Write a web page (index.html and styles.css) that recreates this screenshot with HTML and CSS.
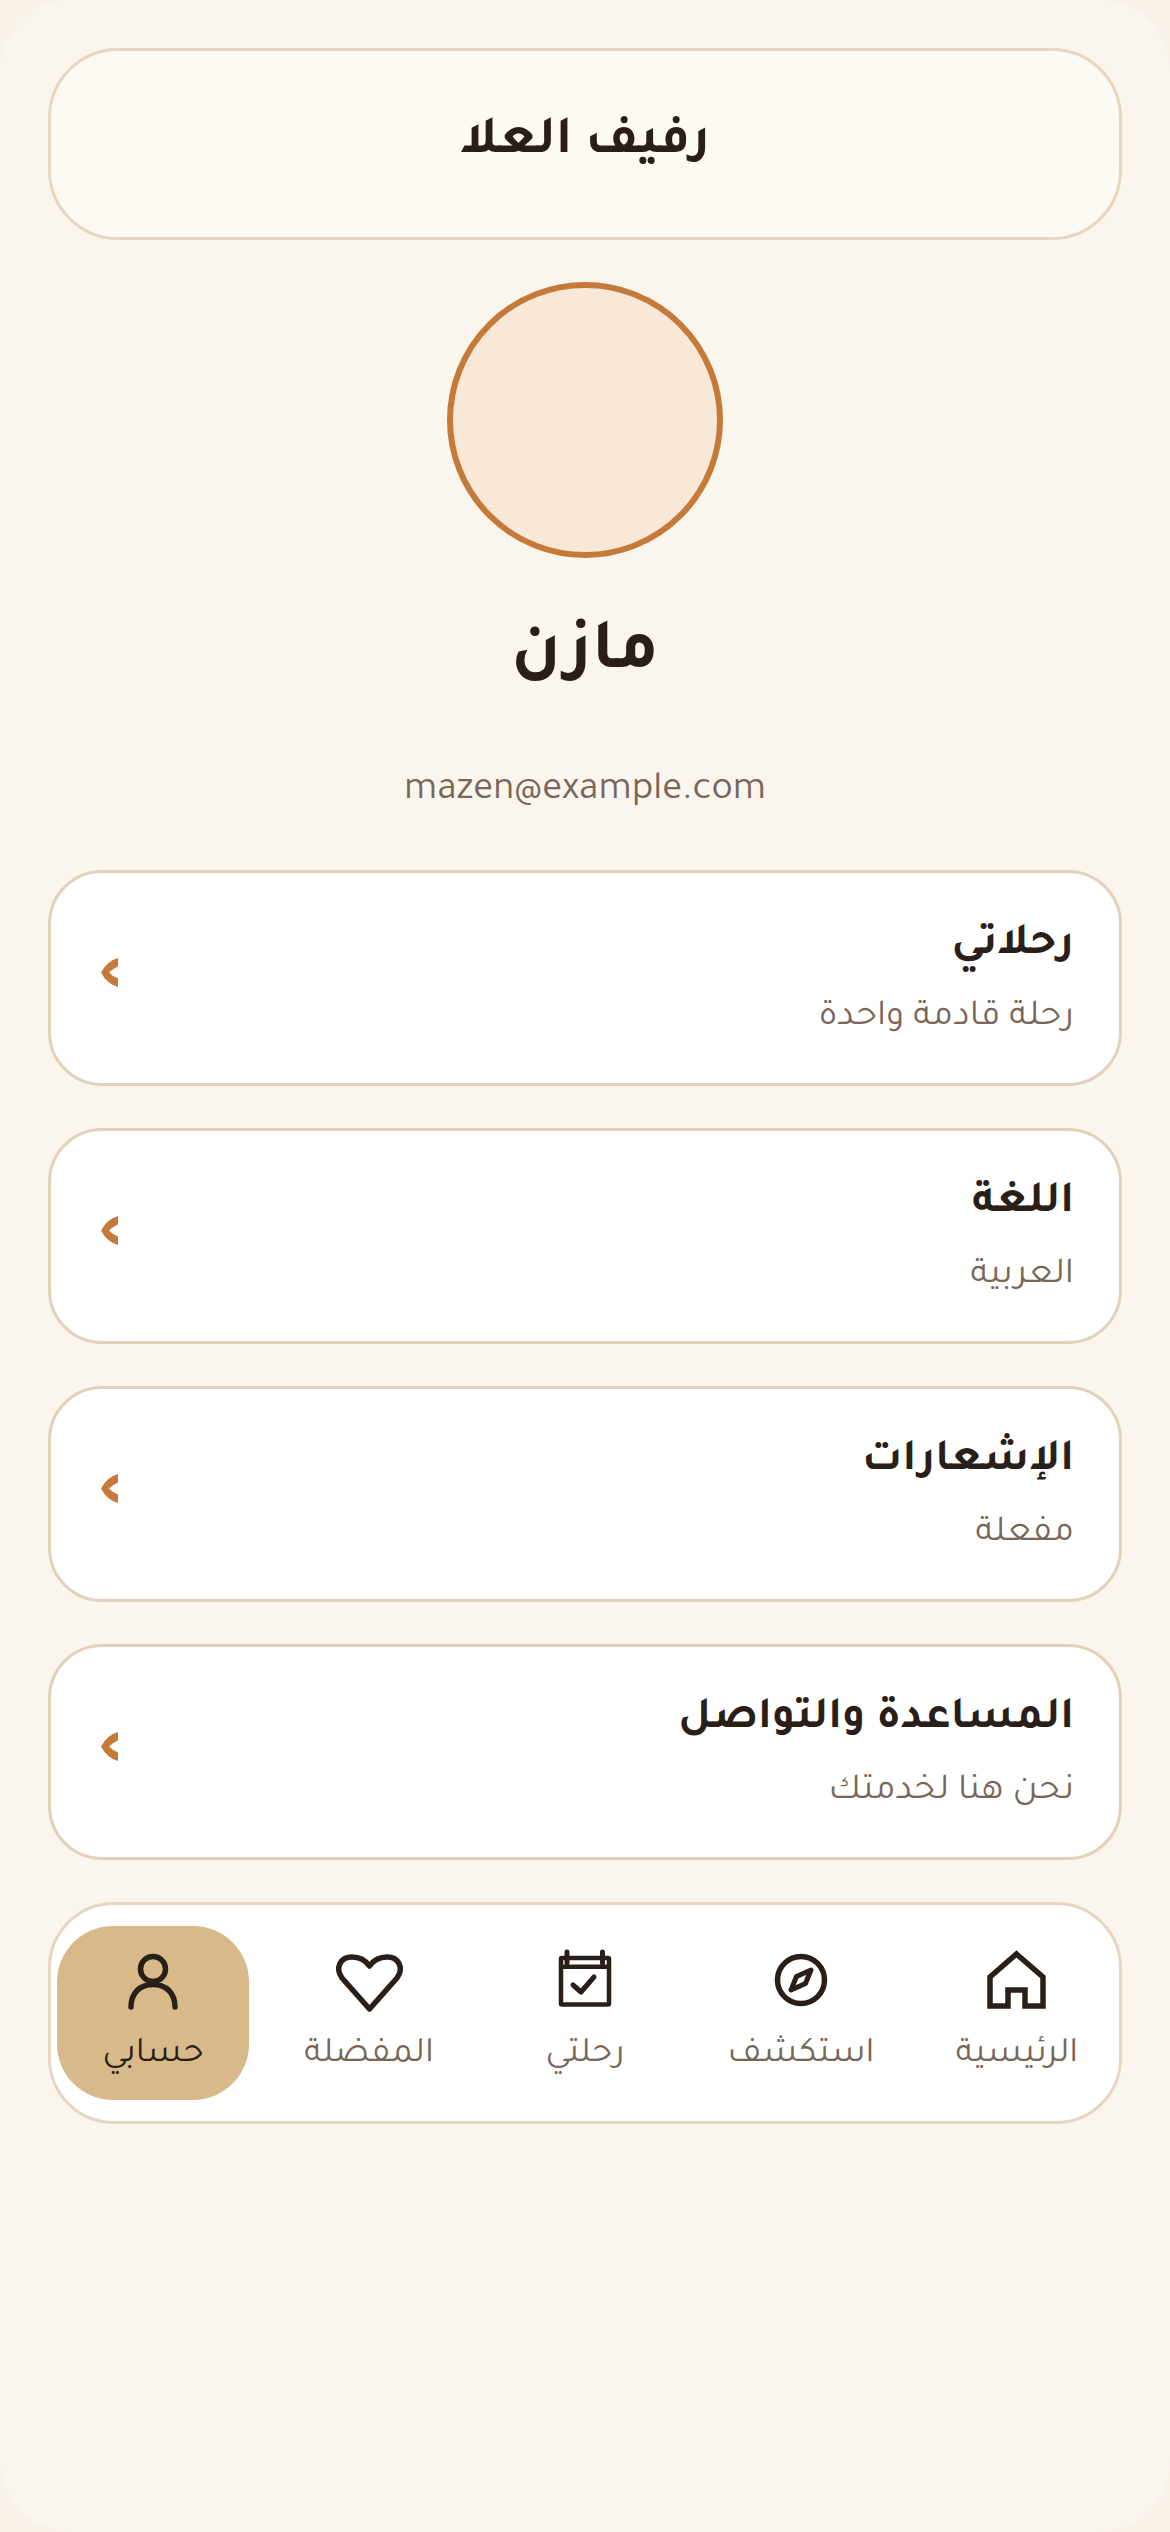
FILE: index.html
```html
<!DOCTYPE html>
<html lang="ar" dir="rtl">
<head>
    <meta charset="UTF-8">
    <meta name="viewport" content="width=device-width, initial-scale=1.0">
    <title>رفيف العلا</title>
    <link rel="stylesheet" href="styles.css">
</head>
<body>
    <div class="page">
        <header class="top-bar">
            <h1 class="brand">رفيف العلا</h1>
        </header>

        <section class="profile">
            <div class="avatar"></div>
            <h2 class="profile-name">مازن</h2>
            <p class="profile-email">mazen@example.com</p>
        </section>

        <section class="menu">
            <a href="#" class="menu-card">
                <div class="menu-text">
                    <h3 class="menu-title">رحلاتي</h3>
                    <p class="menu-sub">رحلة قادمة واحدة</p>
                </div>
                <svg class="chevron" viewBox="0 0 17 29"><path d="M17 0Q6 3 0 14.5Q6 26 17 29V20.5Q11 18 8 14.5Q11 11 17 8.5Z"/></svg>
            </a>
            <a href="#" class="menu-card">
                <div class="menu-text">
                    <h3 class="menu-title">اللغة</h3>
                    <p class="menu-sub">العربية</p>
                </div>
                <svg class="chevron" viewBox="0 0 17 29"><path d="M17 0Q6 3 0 14.5Q6 26 17 29V20.5Q11 18 8 14.5Q11 11 17 8.5Z"/></svg>
            </a>
            <a href="#" class="menu-card">
                <div class="menu-text">
                    <h3 class="menu-title">الإشعارات</h3>
                    <p class="menu-sub">مفعلة</p>
                </div>
                <svg class="chevron" viewBox="0 0 17 29"><path d="M17 0Q6 3 0 14.5Q6 26 17 29V20.5Q11 18 8 14.5Q11 11 17 8.5Z"/></svg>
            </a>
            <a href="#" class="menu-card">
                <div class="menu-text">
                    <h3 class="menu-title">المساعدة والتواصل</h3>
                    <p class="menu-sub">نحن هنا لخدمتك</p>
                </div>
                <svg class="chevron" viewBox="0 0 17 29"><path d="M17 0Q6 3 0 14.5Q6 26 17 29V20.5Q11 18 8 14.5Q11 11 17 8.5Z"/></svg>
            </a>
        </section>

        <!-- Bottom tabs -->
        <nav class="tabs">
            <a href="#" class="tab">
                <svg class="tab-icon icon-home" viewBox="0 0 64 64"><path d="M31.5 6L58 29V58H40V42H23V58H5V29Z"/></svg>
                <span>الرئيسية</span>
            </a>
            <a href="#" class="tab">
                <svg class="tab-icon" viewBox="0 0 64 64"><circle cx="32" cy="32" r="23.5"/><path class="thin" d="M42 22L36.5 35.5L22 42L27.5 28.5Z"/></svg>
                <span>استكشف</span>
            </a>
            <a href="#" class="tab">
                <svg class="tab-icon icon-calendar" viewBox="0 0 64 64"><rect x="8" y="10" width="48" height="46.5" rx="1"/><path d="M8 18.7H56"/><path class="pin" d="M14 4V15M49.5 4V15M20 37L28 44L41 29"/></svg>
                <span>رحلتي</span>
            </a>
            <a href="#" class="tab">
                <svg class="tab-icon" viewBox="0 0 64 64"><path d="M32.5 61L5 30C-2 20 3 9 15 9C23 9 29 13 32.5 18C36 13 42 9 50 9C62 9 67 20 60 30Z"/></svg>
                <span>المفضلة</span>
            </a>
            <a href="#" class="tab active">
                <svg class="tab-icon" viewBox="0 0 64 64"><circle cx="32" cy="21" r="12.5"/><path d="M10 59C10 45 19 36.5 32 36.5C45 36.5 54 45 54 59"/></svg>
                <span>حسابي</span>
            </a>
        </nav>
    </div>
</body>
</html>
```

FILE: styles.css
```css
* {
    box-sizing: border-box;
}

html, body {
    margin: 0;
}

body {
    background-color: #f9f2e8;
    font-family: "Tajawal", "DejaVu Sans", sans-serif;
    color: #2a1f18;
}

.page {
    height: 2532px;
    padding: 48px;
    background-color: #faf5ed;
    border-radius: 72px;
}

/* Top bar */
.top-bar {
    height: 192px;
    background-color: #fdfaf3;
    border: 3px solid #e6d6c2;
    border-radius: 70px;
    display: flex;
    justify-content: center;
    padding-top: 61px;
}

.brand {
    margin: 0;
    font-size: 54px;
    line-height: 64px;
    font-weight: 700;
}

/* Profile */
.profile {
    margin-top: 42px;
    display: flex;
    flex-direction: column;
    align-items: center;
}

.avatar {
    width: 276px;
    height: 276px;
    border-radius: 50%;
    background-color: #f7e8d8;
    border: 6px solid #c67a3a;
}

.profile-name {
    margin: 57px 0 0;
    font-size: 72px;
    line-height: 84px;
    font-weight: 700;
}

.profile-email {
    margin: 69px 0 0;
    font-size: 40px;
    line-height: 48px;
    color: #786759;
}

/* Menu cards */
.menu {
    margin-top: 54px;
    display: flex;
    flex-direction: column;
    gap: 42px;
}

.menu-card {
    height: 216px;
    background-color: #fff;
    border: 3px solid #e3d2ba;
    border-radius: 54px;
    padding: 6px 45px 0 50px;
    display: flex;
    align-items: center;
    justify-content: space-between;
    text-decoration: none;
    color: inherit;
}

.menu-title {
    margin: 0;
    font-size: 45px;
    line-height: 56px;
    font-weight: 700;
}

.menu-sub {
    margin: 20px 0 0;
    font-size: 37px;
    line-height: 48px;
    color: #786759;
}

.chevron {
    width: 17px;
    height: 29px;
    margin-bottom: 17px;
    fill: #c67a3a;
}

/* Bottom tabs */
.tabs {
    margin-top: 42px;
    height: 222px;
    background-color: #fff;
    border: 3px solid #e6d6c2;
    border-radius: 66px;
    padding: 21px 6px;
    display: grid;
    grid-template-columns: repeat(5, 192px);
    justify-content: space-between;
}

.tab {
    border-radius: 56px;
    display: flex;
    flex-direction: column;
    align-items: center;
    padding-top: 22px;
    text-decoration: none;
    font-size: 36px;
    line-height: 48px;
    color: #786759;
}

.tab-icon {
    width: 64px;
    height: 64px;
    margin-bottom: 20px;
    overflow: visible;
    fill: none;
    stroke: #2a1f18;
    stroke-width: 5.5;
    stroke-linecap: round;
    stroke-linejoin: round;
}

.tab-icon .thin {
    stroke-width: 5;
}

.icon-home {
    stroke-linejoin: miter;
}

.icon-calendar {
    stroke-width: 4.5;
}

.icon-calendar .pin {
    stroke-width: 5;
}

.tab.active {
    background-color: #d8b98a;
    color: #2a1f18;
}
```
